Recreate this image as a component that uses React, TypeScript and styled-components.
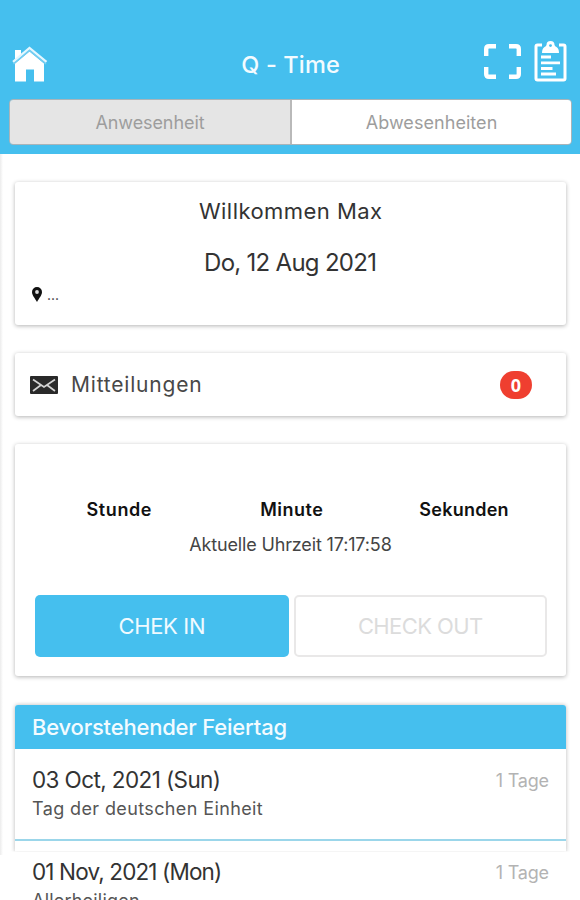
import React from 'react';
import styled, { createGlobalStyle } from 'styled-components';

const BLUE = '#45bfee';

const GlobalStyle = createGlobalStyle`
  *, *::before, *::after { box-sizing: border-box; }
  html, body { margin: 0; padding: 0; background: #fff; overflow: hidden; }
`;

const Screen = styled.div`
  display: flex;
  flex-direction: column;
  height: 900px;
  overflow: hidden;
  background: linear-gradient(90deg, #ececec 0, #fff 3px) 0 0 / 100% 855px no-repeat #fff;
  font-family: Inter, "Noto Sans", sans-serif;
  color: #333;
`;

const Label = styled.span<{ $size: number; $track?: number; $weight?: number; $color?: string }>`
  font-size: ${(p) => p.$size}px;
  letter-spacing: ${(p) => p.$track ?? 0}px;
  margin-right: ${(p) => -(p.$track ?? 0)}px;
  font-weight: ${(p) => p.$weight ?? 400};
  color: ${(p) => p.$color ?? 'inherit'};
  white-space: nowrap;
`;

const Header = styled.header`
  flex: none;
  height: 153.5px;
  padding: 40px 8px 0 9px;
  background: ${BLUE};
`;

const TitleBar = styled.div`
  display: grid;
  grid-template-columns: 98px 1fr 98px;
  align-items: center;
  height: 48px;
  margin-bottom: 11px;
  text-align: center;
  svg { display: block; }
`;

const Actions = styled.div`
  display: flex;
  align-items: center;
  justify-content: flex-end;
  gap: 13px;
  padding: 0 5px 6px 0;
`;

const Tabs = styled.div`
  display: grid;
  grid-template-columns: 282px 1fr;
  height: 46px;
  border: 1px solid #a9b4b9;
  border-radius: 4px;
  overflow: hidden;
`;

const Tab = styled.button<{ $active?: boolean }>`
  display: flex;
  align-items: center;
  justify-content: center;
  padding: 0;
  border: 0;
  border-right: ${(p) => (p.$active ? '2px solid #b9b9b9' : '0')};
  background: ${(p) => (p.$active ? '#e5e5e5' : '#fff')};
  color: #9d9d9d;
  font-family: inherit;
`;

const Content = styled.main`
  display: flex;
  flex-direction: column;
  gap: 28px;
  padding: 28px 14px 0 15px;
`;

const Card = styled.section<{ $height: number }>`
  flex: none;
  height: ${(p) => p.$height}px;
  background: #fff;
  border-radius: 3px;
  box-shadow: 0 1px 4px rgba(0, 0, 0, 0.3);
`;

const Welcome = styled(Card)`
  display: grid;
  grid-template-rows: 58px 45px 20px;
  align-items: center;
  justify-items: center;
`;

const Place = styled.div`
  display: flex;
  align-items: center;
  justify-self: start;
  gap: 5px;
  height: 17px;
  padding-left: 17px;
`;

const Messages = styled(Card)`
  display: flex;
  align-items: center;
  padding: 0 34px 0 15px;
  gap: 13px;
`;

const Badge = styled.span`
  display: flex;
  align-items: center;
  justify-content: center;
  width: 32px;
  height: 28px;
  margin-left: auto;
  border-radius: 14px;
  background: #ef3f30;
  color: #fff;
  font: 700 18px "Open Sans", sans-serif;
`;

const Clock = styled(Card)`
  display: flex;
  flex-direction: column;
  padding: 53px 20px 0;
`;

const Units = styled.div`
  display: grid;
  grid-template-columns: 168px 177px 168px;
  height: 24px;
  align-items: center;
  justify-items: center;
  color: #111;
`;

const CurrentTime = styled.div`
  display: flex;
  justify-content: center;
  align-items: center;
  height: 47px;
  color: #444;
`;

const Buttons = styled.div`
  display: grid;
  grid-template-columns: 254px 253px;
  gap: 5px;
  margin-top: 27px;
`;

const ActionButton = styled.button<{ $primary?: boolean }>`
  height: 62px;
  padding: 0 0 1px;
  border: ${(p) => (p.$primary ? '0' : '2px solid #e9e8e8')};
  border-radius: 5px;
  background: ${(p) => (p.$primary ? BLUE : '#fff')};
  color: ${(p) => (p.$primary ? '#f0faff' : '#dcdcdc')};
  font-family: inherit;
`;

const Holidays = styled.section`
  position: relative;
  isolation: isolate;
  flex: none;
  margin-top: 0.5px;

  &::before {
    content: '';
    position: absolute;
    z-index: -1;
    inset: 0 0 auto 0;
    height: 147px;
    border-radius: 3px 3px 0 0;
    box-shadow: 0 0 4px rgba(0, 0, 0, 0.28);
    background: #fff;
    clip-path: inset(-3px -4px 0 -4px);
  }
`;

const HolidayHead = styled.h2`
  display: flex;
  align-items: center;
  height: 44.5px;
  margin: 0;
  padding: 0 0 0 17px;
  border-radius: 3px 3px 0 0;
  background: ${BLUE};
  color: #f3fbff;
`;

const Holiday = styled.article`
  display: grid;
  grid-template-columns: 1fr auto;
  grid-template-rows: 30px 28px;
  align-items: center;
  height: 92px;
  padding: 15px 17px 0;
  border-bottom: 2px solid #9bd6ea;
`;

const Duration = styled.div`
  padding-top: 3px;
`;

const HomeIcon = () => (
  <svg width="40" height="36" viewBox="0 0 40 36">
    <path d="M6 4h6v6l-6 5z" fill="#fff" />
    <path d="M6 17.500 20.500 5.500 35 17.500V35.500H25v-12h-8v12H6z" fill="#fff" />
    <path d="M4.500 18 20.500 4.500 37 18" fill="none" stroke="#75cdf2" strokeWidth="1.500" />
    <path d="M4 15.800 20.500 2 37.500 15.800" fill="none" stroke="#e4f7ff" strokeWidth="2.200" />
  </svg>
);

const ScanIcon = () => (
  <svg width="37" height="35" viewBox="0 0 37 35" fill="none" stroke="#fff" strokeWidth="4.4">
    <path d="M2.200 12V5Q2.200 2.200 5 2.200h7M25 2.200h7q2.800 0 2.800 2.800v7M34.800 23v7q0 2.800-2.800 2.800h-7M12 32.800H5Q2.200 32.800 2.200 30v-7" />
  </svg>
);

const ClipboardIcon = () => (
  <svg width="33" height="41" viewBox="0 0 33 41">
    <path d="M8 4H3.500Q2 4 2 5.500v32Q2 39 3.500 39h26Q31 39 31 37.500v-32Q31 4 29.500 4H25" fill="none" stroke="#fff" strokeWidth="3" />
    <path d="M12.500 4a4 4 0 0 1 8 0q.5 1.500 2 2Q25 7.500 25 12H8q0-4.500 2.500-6Q12 5.500 12.500 4z" fill="#fff" />
    <circle cx="16.500" cy="4.600" r="1.400" fill={BLUE} />
    <path d="M7 16h10M7 21.800h19M7 27.500h11.500M7 33h15" stroke="#fff" strokeWidth="2.800" />
  </svg>
);

const PinIcon = () => (
  <svg width="10" height="15" viewBox="0 0 10 15">
    <path d="M5 0a5 5 0 0 1 5 5c0 3.300-2.700 5.800-5 10C2.700 10.800 0 8.300 0 5a5 5 0 0 1 5-5z" fill="#111" />
    <circle cx="5" cy="5" r="1.900" fill="#ddd" />
  </svg>
);

const MailIcon = () => (
  <svg width="28" height="18" viewBox="0 0 28 18">
    <rect width="28" height="18" rx="1" fill="#292929" />
    <path d="M3 3.500 14 11 25 3.500M3 15l8-6M25 15l-8-6" fill="none" stroke="#d2d2d2" strokeWidth="1.700" />
  </svg>
);

const holidays = [
  { date: '03 Oct, 2021 (Sun)', dateTrack: -0.6, name: 'Tag der deutschen Einheit', nameTrack: 0.38 },
  { date: '01 Nov, 2021 (Mon)', dateTrack: -0.86, name: 'Allerheiligen', nameTrack: 0.21 },
];

export default function App() {
  return (
    <Screen>
      <GlobalStyle />
      <Header>
        <TitleBar>
          <HomeIcon />
          <Label $size={23.5} $track={0.15} $weight={500} $color="#f3fbff">Q - Time</Label>
          <Actions>
            <ScanIcon />
            <ClipboardIcon />
          </Actions>
        </TitleBar>
        <Tabs>
          <Tab $active><Label $size={18} $track={-0.08}>Anwesenheit</Label></Tab>
          <Tab><Label $size={18} $track={0.05}>Abwesenheiten</Label></Tab>
        </Tabs>
      </Header>
      <Content>
        <Welcome $height={143.5}>
          <Label $size={22} $track={0.45}>Willkommen Max</Label>
          <Label $size={24} $track={-0.72}>Do, 12 Aug 2021</Label>
          <Place>
            <PinIcon />
            <Label $size={14}>...</Label>
          </Place>
        </Welcome>
        <Messages $height={63}>
          <MailIcon />
          <Label $size={21} $track={0.8} $color="#484848">Mitteilungen</Label>
          <Badge>0</Badge>
        </Messages>
        <Clock $height={232}>
          <Units>
            <Label $size={18} $track={0.6} $weight={600}>Stunde</Label>
            <Label $size={18} $track={0.5} $weight={600}>Minute</Label>
            <Label $size={18} $track={0.25} $weight={600}>Sekunden</Label>
          </Units>
          <CurrentTime><Label $size={18} $track={-0.15}>Aktuelle Uhrzeit 17:17:58</Label></CurrentTime>
          <Buttons>
            <ActionButton $primary><Label $size={22} $track={-0.35}>CHEK IN</Label></ActionButton>
            <ActionButton><Label $size={22} $track={-0.61}>CHECK OUT</Label></ActionButton>
          </Buttons>
        </Clock>
        <Holidays>
          <HolidayHead><Label $size={22} $weight={500} $track={-0.2}>Bevorstehender Feiertag</Label></HolidayHead>
          {holidays.map((h) => (
            <Holiday key={h.date}>
              <Label $size={22.5} $track={h.dateTrack}>{h.date}</Label>
              <Duration><Label $size={18} $track={-0.2} $color="#b3b3b3">1 Tage</Label></Duration>
              <Label $size={18} $track={h.nameTrack} $color="#555">{h.name}</Label>
            </Holiday>
          ))}
        </Holidays>
      </Content>
    </Screen>
  );
}
